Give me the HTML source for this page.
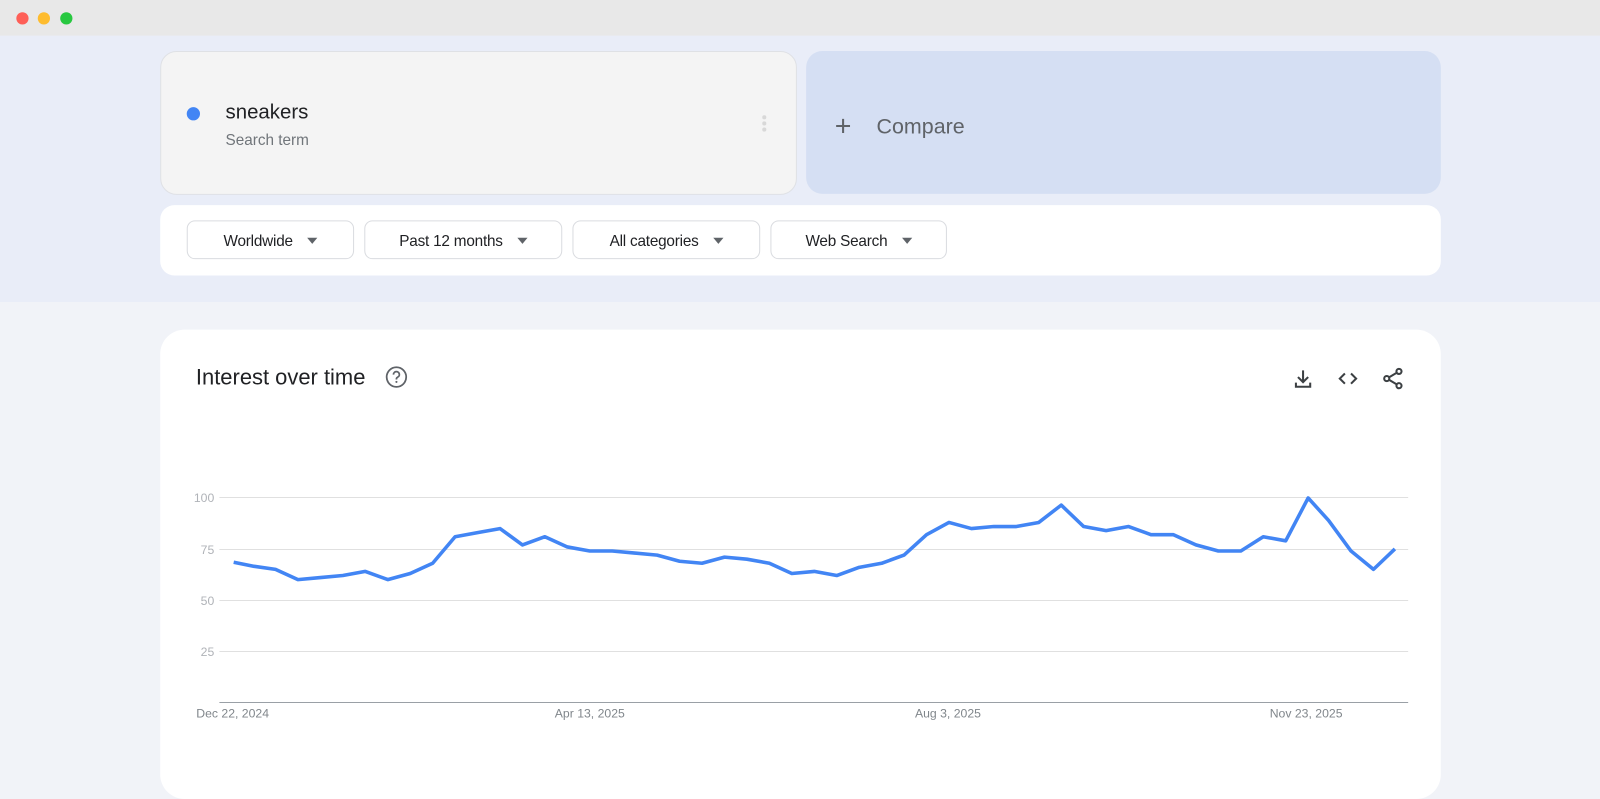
<!DOCTYPE html>
<html><head><meta charset="utf-8"><style>
html,body{margin:0;padding:0;width:1600px;height:780px;overflow:hidden;background:#f1f3f8;font-family:"Liberation Sans",Arial,sans-serif}
#w{position:absolute;left:0;top:0;width:1568px;height:765px;transform:scale(1.020408);transform-origin:0 0}
.a{position:absolute}
.bar{left:0;top:0;width:1568px;height:35px;background:#e8e8e8}
.dot{width:12px;height:12px;border-radius:50%;top:12px}
.top{left:0;top:35px;width:1568px;height:261px;background:#e9edf8}
.c1{left:157px;top:50px;width:622px;height:139px;background:#f4f4f4;border:1px solid #dfe1e5;border-radius:16px}
.c2{left:790px;top:50px;width:622px;height:140px;background:#d5dff3;border-radius:16px}
.fb{left:157px;top:201px;width:1255px;height:69px;background:#fff;border-radius:14px}
.btn{top:216px;height:38px;border:1px solid #dadce0;border-radius:8px;background:#fff;font-size:15px;color:#202124;line-height:40px;text-align:center;box-sizing:border-box;letter-spacing:-0.2px}
.tri{display:inline-block;width:0;height:0;border-left:5px solid transparent;border-right:5px solid transparent;border-top:6px solid #5f6368;margin-left:14px;vertical-align:2px}
.main{left:157px;top:323px;width:1255px;height:460px;background:#fff;border-radius:24px}
</style></head><body><div id="w">
<div class="a bar"></div>
<div class="a dot" style="left:16px;background:#fe5f57"></div>
<div class="a dot" style="left:37px;background:#febc2e"></div>
<div class="a dot" style="left:59px;background:#28c840"></div>
<div class="a top"></div>
<div class="a c1"></div>
<div class="a" style="left:183px;top:105px;width:13px;height:13px;border-radius:50%;background:#4285f4"></div>
<div class="a" style="left:221px;top:99px;font-size:20px;color:#202124">sneakers</div>
<div class="a" style="left:221px;top:129px;font-size:15px;color:#70757a">Search term</div>
<div class="a" style="left:747px;top:113px;width:4px;height:4px;border-radius:50%;background:#d8d8d8;box-shadow:0 6px 0 #d8d8d8,0 12px 0 #d8d8d8"></div>
<div class="a c2"></div>
<div class="a" style="left:818px;top:109px;font-size:28px;color:#5f6368;line-height:30px">+</div>
<div class="a" style="left:859px;top:113px;font-size:21px;color:#5f6368">Compare</div>
<div class="a fb"></div>
<div class="a btn" style="left:183px;width:164px">Worldwide<span class="tri"></span></div>
<div class="a btn" style="left:357px;width:194px">Past 12 months<span class="tri"></span></div>
<div class="a btn" style="left:561px;width:184px">All categories<span class="tri"></span></div>
<div class="a btn" style="left:755px;width:173px">Web Search<span class="tri"></span></div>
<div class="a main"></div>
<div class="a" style="left:192px;top:358px;font-size:21.5px;color:#202124">Interest over time</div>
<svg class="a" style="left:377px;top:358px" width="23" height="23" viewBox="0 0 24 24"><circle cx="12" cy="12" r="10" fill="none" stroke="#5f6368" stroke-width="1.8"/><path d="M9 9.5a3 3 0 1 1 4.2 2.7c-.8.4-1.2 1-1.2 1.8v.5" fill="none" stroke="#5f6368" stroke-width="1.8"/><circle cx="12" cy="17" r="1.1" fill="#5f6368"/></svg>
<svg class="a" style="left:1265px;top:359px" width="24" height="24" viewBox="0 0 24 24" fill="none" stroke="#3c4043" stroke-width="2"><path d="M12 4v11M7 10.5l5 5 5-5M5 16v4h14v-4"/></svg>
<svg class="a" style="left:1309px;top:359px" width="24" height="24" viewBox="0 0 24 24" fill="none" stroke="#3c4043" stroke-width="2"><path d="M9 7l-5 5 5 5M15 7l5 5-5 5"/></svg>
<svg class="a" style="left:1353px;top:359px" width="24" height="24" viewBox="0 0 24 24" fill="none" stroke="#3c4043" stroke-width="2"><circle cx="18" cy="5" r="2.5"/><circle cx="6" cy="12" r="2.5"/><circle cx="18" cy="19" r="2.5"/><path d="M8.2 10.8l7.6-4.5M8.2 13.2l7.6 4.5"/></svg>
<svg class="a" style="left:0;top:0" width="1568" height="765">
<g stroke="#e0e0e0" stroke-width="1"><line x1="215" y1="487.5" x2="1380" y2="487.5"/><line x1="215" y1="538.5" x2="1380" y2="538.5"/><line x1="215" y1="588.5" x2="1380" y2="588.5"/><line x1="215" y1="638.5" x2="1380" y2="638.5"/></g>
<line x1="215" y1="688.5" x2="1380" y2="688.5" stroke="#9aa0a6" stroke-width="1"/>
<g font-size="12" fill="#b0b3b8" text-anchor="end" font-family="Liberation Sans,sans-serif"><text x="210" y="492">100</text><text x="210" y="543">75</text><text x="210" y="593">50</text><text x="210" y="643">25</text></g>
<g font-size="12" fill="#80868b" text-anchor="middle" font-family="Liberation Sans,sans-serif"><text x="228" y="703">Dec 22, 2024</text><text x="578" y="703">Apr 13, 2025</text><text x="929" y="703">Aug 3, 2025</text><text x="1280" y="703">Nov 23, 2025</text></g>
<polyline fill="none" stroke="#4285f4" stroke-width="3.5" stroke-linejoin="round" points="229,551 249,555 270,558 292,568 314,566 336,564 358,560 380,568 402,562 424,552 446,526 468,522 490,518 512,534 534,526 556,536 578,540 600,540 622,542 644,544 666,550 688,552 710,546 732,548 754,552 776,562 798,560 820,564 842,556 864,552 886,544 908,524 930,512 952,518 974,516 996,516 1018,512 1040,495 1062,516 1084,520 1106,516 1128,524 1150,524 1172,534 1194,540 1216,540 1238,526 1260,530 1282,488 1302,510 1324,540 1346,558 1367,538"/>
</svg>
</div></body></html>
